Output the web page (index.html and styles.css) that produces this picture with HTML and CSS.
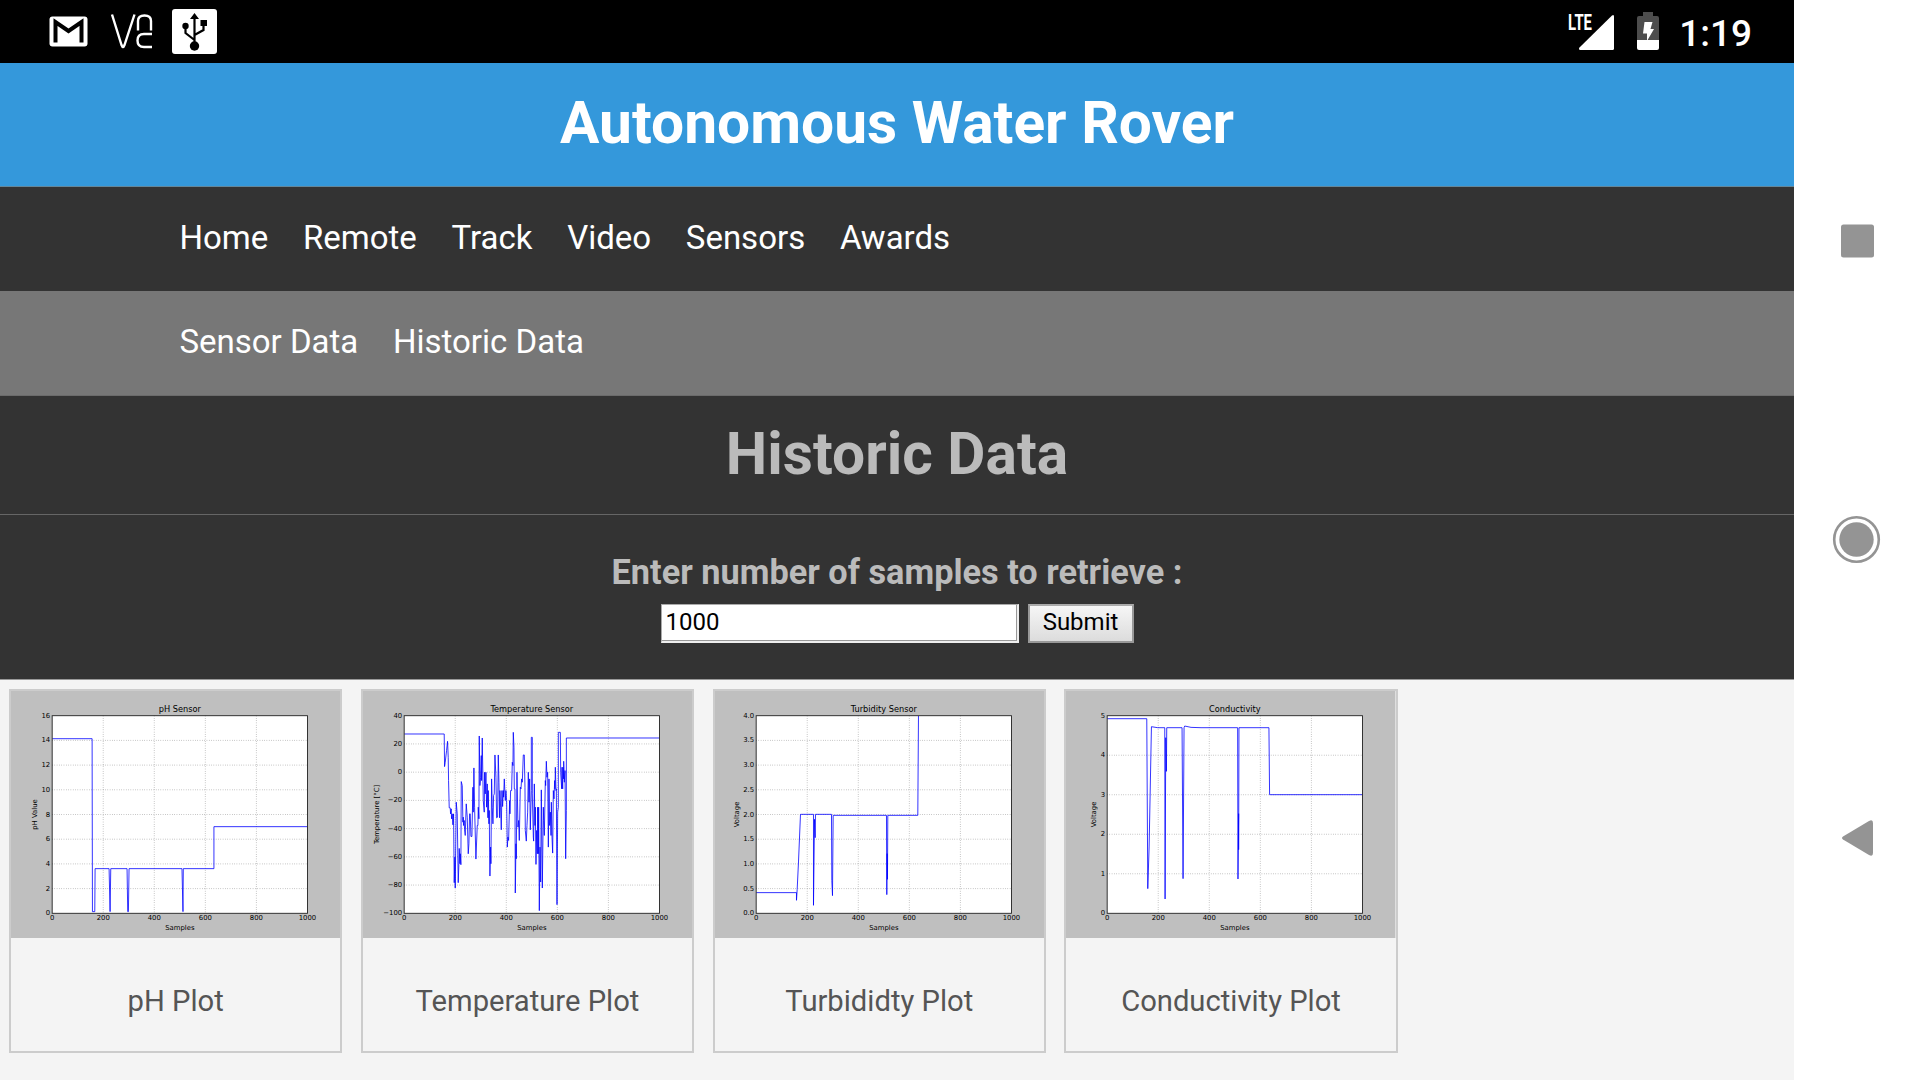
FILE: index.html
```html
<!DOCTYPE html>
<html lang="en">
<head>
<meta charset="utf-8">
<title>Autonomous Water Rover</title>
<link rel="stylesheet" href="styles.css">
</head>
<body>
<div class="device">
  <main class="screen">
    <div class="status">
      <svg class="status-left" width="240" height="63" viewBox="0 0 240 63">
        <rect x="49.5" y="16.5" width="38" height="30" rx="3" fill="#fff"/>
        <path d="M55.5 42.5V22L68.500 31L81.500 22V42.500" fill="none" stroke="#000" stroke-width="4"/>
        <g fill="none" stroke="#fff" stroke-width="2.400" stroke-linejoin="round">
          <path d="M112 14.500L121.500 45Q123 49 124.500 45L134.500 14.500"/>
          <path d="M138 30.500V21Q138 15.500 144.500 15.500T151 21V30.500"/>
          <path d="M152 34H144Q137.500 34 137.500 40.500T144 47H152"/>
        </g>
        <rect x="172" y="9" width="45" height="45" rx="3" fill="#fff"/>
        <path d="M194.500 45V17M194.500 40L185.500 33V26M194.500 35L203.500 30V23" fill="none" stroke="#000" stroke-width="2.200"/>
        <path d="M194.500 13L199 19H190ZM200.500 20H207V26H200.500Z"/>
        <circle cx="194.500" cy="46" r="4.700"/><circle cx="185.500" cy="26" r="3.200"/>
      </svg>
      <div class="status-right">
        <svg width="100" height="63" viewBox="1564 0 100 63">
          <text class="lte" x="1568" y="30" textLength="24" lengthAdjust="spacingAndGlyphs">LTE</text>
          <path d="M1612 15.500Q1614 14 1614 16.500V48.500Q1614 50 1612.500 50H1580.500Q1578 49.500 1579.500 47.500Z" fill="#fff"/>
          <path d="M1643 16V12H1653V16H1657Q1659 16 1659 18V40H1637V18Q1637 16 1639 16Z" fill="#4d4d4d"/>
          <path d="M1637 40H1659V48Q1659 50 1657 50H1639Q1637 50 1637 48Z" fill="#fff"/>
          <path d="M1644.500 22H1652.500L1650.500 29H1654L1647 41V33.500H1643Z" fill="#fff"/>
        </svg>
        <span class="clock">1:19</span>
      </div>
    </div>
    <header class="banner"><h1>Autonomous Water Rover</h1></header>
    <nav class="menu">
      <a>Home</a><a>Remote</a><a>Track</a><a>Video</a><a>Sensors</a><a>Awards</a>
    </nav>
    <nav class="menu submenu">
      <a>Sensor Data</a><a>Historic Data</a>
    </nav>
    <section class="title"><h2>Historic Data</h2></section>
    <form class="query">
      <label for="samples">Enter number of samples to retrieve :</label>
      <div class="fields">
        <input id="samples" type="text" value="1000">
        <button type="button">Submit</button>
      </div>
    </form>
    <section class="gallery">
      <figure><svg class="plot" id="ph" viewBox="0 0 800 600" preserveAspectRatio="none"></svg><figcaption>pH Plot</figcaption></figure>
      <figure><svg class="plot" id="temperature" viewBox="0 0 800 600" preserveAspectRatio="none"></svg><figcaption>Temperature Plot</figcaption></figure>
      <figure><svg class="plot" id="turbidity" viewBox="0 0 800 600" preserveAspectRatio="none"></svg><figcaption>Turbididty Plot</figcaption></figure>
      <figure><svg class="plot" id="conductivity" viewBox="0 0 800 600" preserveAspectRatio="none"></svg><figcaption>Conductivity Plot</figcaption></figure>
    </section>
  </main>
  <aside class="sysnav">
    <svg width="126" height="1080" viewBox="1794 0 126 1080" fill="#949494">
      <rect x="1841" y="224.500" width="33" height="33" rx="2.500"/>
      <circle cx="1856.500" cy="539.500" r="22.300" fill="none" stroke="#949494" stroke-width="2.600"/>
      <circle cx="1856.500" cy="539.500" r="17.200"/>
      <path d="M1843 836.500Q1841 838 1843 839.500L1869 855Q1873 857 1873 853V823Q1873 819 1869 821Z"/>
    </svg>
  </aside>
</div>
<script src="plots.js"></script>
</body>
</html>
```
FILE: plots.js
```js
// Each trace lies on its own grid; "box" gives that grid's x, y, width and height.
const plots = {
  ph: {
    title: "pH Sensor", label: "pH Value", labelX: 64,
    ticks: ["0", "2", "4", "6", "8", "10", "12", "14", "16"], box: "157 106 767 593",
    trace: "157,175 277,175 278,694 285,694 286,565 328,565 331,694 333,565 382,565 384,694 386,694 388,565 547,565 550,694 551,565 643,565 643,439 924,439"
  },
  temperature: {
    title: "Temperature Sensor", label: "Temperature [°C]", labelX: 39,
    ticks: ["−100", "−80", "−60", "−40", "−20", "0", "20", "40"], box: "13 15 765 594",
    trace: "13,70 133,70 134,168 136,155 140,120 143,92 145,140 146,210 148,292 151,292 152,310 154,295 155,325 157,310 159,343 161,310 163,517 165,440 166,533 169,275 172,310 175,517 177,460 178,414 180,460 181,430 183,463 184,213 187,225 189,335 190,320 191,345 193,330 194,358 196,375 199,280 202,320 205,430 207,400 209,310 211,310 213,378 216,378 219,230 220,305 222,172 224,290 228,446 232,345 234,345 235,290 237,325 238,76 240,225 242,200 244,135 245,210 247,82 250,270 253,305 254,185 256,250 258,185 260,290 262,220 264,322 265,240 267,340 268,300 269,425 270,497 272,410 273,460 275,205 277,290 279,340 281,255 283,250 285,133 288,200 290,322 293,320 295,133 297,215 299,322 300,240 302,290 304,358 306,240 308,288 310,240 311,260 313,205 316,270 318,240 320,270 322,410 324,380 326,390 329,270 330,310 332,240 335,240 337,155 339,165 340,65 342,110 343,235 345,235 346,548 348,400 349,445 351,185 354,350 356,330 358,390 361,230 363,235 365,205 367,215 370,133 373,133 375,230 376,360 379,392 381,345 383,305 385,185 387,275 389,205 391,358 394,240 394,80 397,80 397,250 400,380 401,392 403,220 405,345 406,290 408,462 410,360 412,430 413,290 415,430 416,290 418,601 420,410 422,515 424,238 427,533 430,290 431,330 433,375 436,210 437,225 439,152 441,200 443,185 445,410 447,205 449,345 451,305 453,375 454,275 456,380 458,428 460,240 462,265 464,210 465,235 466,170 468,240 469,235 471,583 473,305 475,290 475,65 481,65 482,185 485,235 486,170 488,235 489,170 491,205 491,152 493,215 495,180 497,445 499,300 499,82 778,82"
  },
  turbidity: {
    title: "Turbidity Sensor", label: "Voltage", labelX: 58,
    ticks: ["0.0", "0.5", "1.0", "1.5", "2.0", "2.5", "3.0", "3.5", "4.0"], box: "153 106 766 593",
    trace: "153,637 274,637 274,660 276,628 280,545 286,402 325,402 325,675 328,417 330,472 331,402 379,402 380,600 382,646 384,405 544,405 545,643 546,520 547,597 548,405 638,405 640,106"
  },
  conductivity: {
    title: "Conductivity", label: "Voltage", labelX: 74,
    ticks: ["0", "1", "2", "3", "4", "5"], box: "158 106 767 593",
    trace: "158,115 277,115 280,625 284,500 291,139 310,142 331,142 332,656 334,172 336,273 337,142 383,142 386,595 389,142 391,137 410,141 440,142 550,142 551,596 553,400 553,508 554,142 644,142 646,343 925,343"
  }
};

const LEFT = 100, RIGHT = 720, TOP = 60, BOTTOM = 540;

for (const [id, p] of Object.entries(plots)) {
  const parts = [`<rect width="800" height="600" class="backdrop"/>`,
    `<rect x="100" y="60" width="620" height="480" fill="#fff"/>`];
  for (let i = 0; i <= 5; i++) {
    const x = LEFT + i * (RIGHT - LEFT) / 5;
    if (i % 5) parts.push(`<path class="grid" d="M${x} ${TOP}V${BOTTOM}"/>`);
    parts.push(`<text class="tick" x="${x}" y="557" text-anchor="middle">${i * 200}</text>`);
  }
  p.ticks.forEach((t, i) => {
    const n = p.ticks.length - 1, y = BOTTOM - i * (BOTTOM - TOP) / n;
    if (i % n) parts.push(`<path class="grid" d="M${LEFT} ${y}H${RIGHT}"/>`);
    parts.push(`<text class="tick" x="95" y="${y + 5}" text-anchor="end">${t}</text>`);
  });
  parts.push(
    `<svg x="100" y="60" width="620" height="480" viewBox="${p.box}" preserveAspectRatio="none"><polyline class="trace" points="${p.trace}"/></svg>`,
    `<rect class="frame" x="100" y="60" width="620" height="480"/>`,
    `<text class="heading" x="410" y="52" text-anchor="middle">${p.title}</text>`,
    `<text class="tick" x="410" y="580" text-anchor="middle">Samples</text>`,
    `<text class="tick" transform="translate(${p.labelX} 300) rotate(-90)" text-anchor="middle">${p.label}</text>`);
  document.getElementById(id).innerHTML = parts.join("");
}
```
FILE: styles.css
```css
* { box-sizing: border-box; }
body { margin: 0; background: #fff; font-family: Roboto, "Liberation Sans", sans-serif; }
h1, h2, figure { margin: 0; }

.device { display: flex; width: 1920px; height: 1080px; overflow: hidden; }
.screen { display: flex; flex-direction: column; width: 1794px; background: #f4f4f4; }
.sysnav { width: 126px; background: #fff; }
svg { display: block; }

.status { display: flex; justify-content: space-between; height: 63px; background: #000; color: #fff; }
.status-right { display: flex; padding-right: 42px; gap: 15px; }
.lte { font-size: 22px; font-weight: 700; fill: #fff; }
.clock { font-size: 37px; font-weight: 500; line-height: 67px; }

.banner { height: 124px; background: #3498db; border-bottom: 1px solid #63879b; color: #fff; text-align: center; }
.banner h1 { font-size: 58.700px; line-height: 121px; }

.menu { display: flex; gap: 34.700px; height: 104px; padding-left: 179.400px; background: #333; color: #fff; font-size: 33px; line-height: 101px; }
.submenu { height: 105px; background: #777; border-bottom: 1px solid #6b6b6b; }

.title { height: 119px; background: #333; border-bottom: 1px solid #666; color: #bbb; text-align: center; }
.title h2 { font-size: 58.700px; line-height: 117px; }

.query { display: flex; flex-direction: column; align-items: center; height: 165px; padding-top: 36px; background: #333; border-bottom: 1px solid #999; color: #bbb; }
.query label { font-size: 34.300px; font-weight: 700; line-height: 42px; }
.fields { display: flex; gap: 9px; margin-top: 11px; }
input, button { margin: 0; height: 39px; font: 24px Roboto, "Liberation Sans", sans-serif; color: #000; border-radius: 0; }
input { width: 358px; padding: 0 4px 3px; background: #fff; border: solid #aaa; border-width: 1px 2px 2px 1px; border-right-color: #eee; border-bottom-color: #eee; box-shadow: inset -1px -1px #999; }
button { width: 106px; padding: 0 0 4px; background: linear-gradient(#f6f6f6, #dcdcdc); border: 2px solid #999; border-top-color: #aaa; }

.gallery { display: flex; gap: 18.400px; padding: 9px; }
figure { width: 333.400px; height: 364px; border: 2px solid #ccc; }
figcaption { font-size: 29.200px; line-height: 126px; color: #555; text-align: center; }

.plot { width: 100%; height: 247px; font-family: "DejaVu Sans", sans-serif; }
.backdrop { fill: #bfbfbf; }
.grid { fill: none; stroke: #000; stroke-opacity: .55; stroke-width: 1.700; stroke-dasharray: 1.400 4.200; }
.frame { fill: none; stroke: #222; stroke-width: 2.200; }
.trace { fill: none; stroke: #00f; stroke-width: .8px; stroke-linejoin: round; vector-effect: non-scaling-stroke; }
.tick { font-size: 16.667px; }
.heading { font-size: 20px; }
```
